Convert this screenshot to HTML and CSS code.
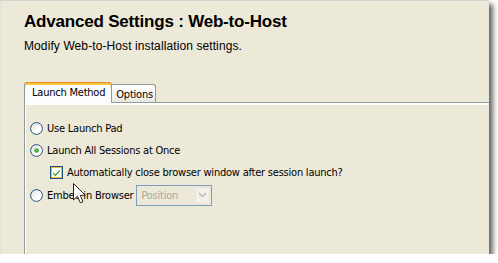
FILE: index.html
```html
<!DOCTYPE html>
<html lang="en">
<head>
    <meta charset="UTF-8">
    <title>Advanced Settings : Web-to-Host</title>
    <link rel="stylesheet" href="styles.css">
</head>
<body>
    <div class="window">
        <div class="header">
            <h1 class="title">Advanced Settings : Web-to-Host</h1>
            <p class="subtitle">Modify Web-to-Host installation settings.</p>
        </div>

        <div class="tabs">
            <div class="tab active">Launch Method</div>
            <div class="tab">Options</div>
        </div>

        <div class="pane">
            <div class="row">
                <svg class="radio" width="13" height="13" viewBox="0 0 13 13">
                    <circle cx="6.5" cy="6.5" r="5.9" fill="url(#radioFill)" stroke="#1c5180" stroke-width="1"/>
                </svg>
                <span class="label">Use Launch Pad</span>
            </div>
            <div class="row">
                <svg class="radio" width="13" height="13" viewBox="0 0 13 13">
                    <circle cx="6.5" cy="6.5" r="5.9" fill="url(#radioFill)" stroke="#1c5180" stroke-width="1"/>
                    <circle cx="6.5" cy="6.5" r="2.3" fill="#2fa82f"/>
                    <circle cx="6.1" cy="6.1" r="0.9" fill="#8fe08f"/>
                </svg>
                <span class="label">Launch All Sessions at Once</span>
            </div>
            <div class="row sub">
                <svg class="check" width="13" height="13" viewBox="0 0 13 13">
                    <rect x="0.5" y="0.5" width="12" height="12" fill="#fffdf4" stroke="#1c5180"/>
                    <rect x="1.5" y="1.5" width="10" height="10" fill="none" stroke="#f8b636"/>
                    <path d="M3.2 6.2 L5.3 8.4 L9.8 3.8 L9.8 5.6 L5.3 10.2 L3.2 8 Z" fill="#21a121"/>
                </svg>
                <span class="label">Automatically close browser window after session launch?</span>
            </div>
            <div class="row">
                <svg class="radio" width="13" height="13" viewBox="0 0 13 13">
                    <circle cx="6.5" cy="6.5" r="5.9" fill="url(#radioFill)" stroke="#1c5180" stroke-width="1"/>
                </svg>
                <span class="label">Embed in Browser</span>
                <div class="select">
                    <span class="select-text">Position</span>
                    <span class="select-btn">
                        <svg width="9" height="6" viewBox="0 0 9 6">
                            <path d="M1 1 L4.5 4.5 L8 1" fill="none" stroke="#c9c7ba" stroke-width="1.8"/>
                        </svg>
                    </span>
                </div>
            </div>
        </div>

        <!-- mouse pointer over the form -->
        <svg class="cursor" width="14" height="22" viewBox="0 0 14 22">
            <path d="M0.5 0.5 L0.5 17 L4.5 13.2 L7.3 19.8 L10 18.7 L7.3 12.3 L12.3 12.3 Z" fill="#fff" stroke="#222" stroke-width="1"/>
        </svg>

        <svg width="0" height="0" class="defs">
            <defs>
                <linearGradient id="radioFill" x1="0" y1="0" x2="1" y2="1">
                    <stop offset="0" stop-color="#dcdcd6"/>
                    <stop offset="0.6" stop-color="#ffffff"/>
                    <stop offset="1" stop-color="#ffffff"/>
                </linearGradient>
            </defs>
        </svg>
    </div>
</body>
</html>
```

FILE: styles.css
```css
/* Reset */
body, h1, p {
    margin: 0;
    padding: 0;
}

body {
    background-color: #fff;
    font-family: "Liberation Sans", Arial, sans-serif;
    color: #000;
}

/* Dialog window */
.window {
    position: relative;
    width: 488px;
    height: 253px;
    background-color: #ece9d8;
    border-top: 1px solid #d4d4d0;
    border-left: 1px solid #e4e2d6;
    box-shadow: 4px 4px 5px rgba(0, 0, 0, 0.6);
    overflow: hidden;
}

/* Header */
.header {
    padding: 11px 23px 0;
}

.title {
    font-size: 17px;
    line-height: 20px;
    font-weight: bold;
    letter-spacing: -0.2px;
}

.subtitle {
    margin-top: 6px;
    font-size: 12px;
    line-height: 16px;
    letter-spacing: 0.1px;
}

/* Tabs */
.tabs {
    display: flex;
    align-items: flex-end;
    margin: 28px 0 0 23px;
    height: 20px;
    border-bottom: 1px solid #919b9c;
    font-family: "DejaVu Sans Condensed", "DejaVu Sans", sans-serif;
    font-size: 11px;
    line-height: 13px;
    letter-spacing: -0.22px;
}

.tab {
    box-sizing: border-box;
    height: 18px;
    padding: 3px 2px 0 4px;
    border: 1px solid #919b9c;
    border-bottom: none;
    border-left: none;
    border-radius: 0 3px 0 0;
    background: linear-gradient(#ffffff, #f3f2ec 70%, #e8e7df);
}

.tab.active {
    position: relative;
    z-index: 1;
    height: 21px;
    margin-bottom: -1px;
    padding: 3px 6px 0 7px;
    border-left: 1px solid #919b9c;
    border-top: 1px solid #e68b2c;
    border-radius: 3px 3px 0 0;
    background: #fcfcfe;
    box-shadow: inset 0 2px 0 #ffc73c;
}

/* Tab pane */
.pane {
    height: 200px;
    margin-left: 23px;
    padding: 14px 0 0 5px;
    border-left: 1px solid #919b9c;
    box-shadow: inset 1px 2px 0 #fff;
    font-family: "DejaVu Sans Condensed", "DejaVu Sans", sans-serif;
    font-size: 11px;
    letter-spacing: -0.22px;
}

.row {
    display: flex;
    align-items: center;
    height: 22px;
}

.row.sub {
    height: 23px;
    padding-left: 20px;
}

.radio, .check {
    flex-shrink: 0;
    margin-right: 4px;
}

/* Disabled combo box */
.select {
    display: flex;
    align-items: center;
    box-sizing: border-box;
    width: 76px;
    height: 21px;
    margin-left: 3px;
    padding: 1px;
    border: 1px solid #7f9db9;
    background-color: #ece9d8;
}

.select-text {
    flex: 1;
    padding-left: 3px;
    color: #aca899;
}

.select-btn {
    display: flex;
    align-items: center;
    justify-content: center;
    width: 15px;
    height: 17px;
    background-color: #f2f1ea;
    border: 1px solid #e6e4da;
    box-sizing: border-box;
}

/* Mouse pointer */
.cursor {
    position: absolute;
    left: 72px;
    top: 182px;
}

.defs {
    position: absolute;
}
```
